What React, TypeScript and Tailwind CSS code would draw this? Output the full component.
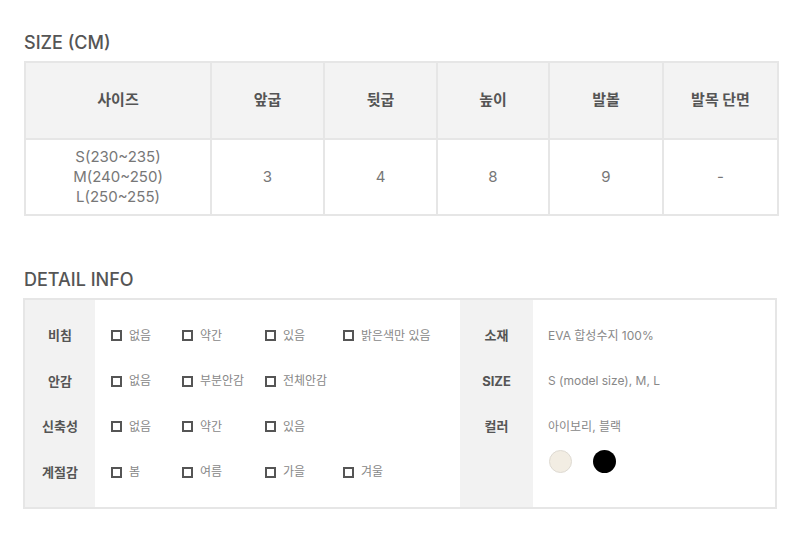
import React from 'react';

const font = { fontFamily: 'Inter, "Noto Sans CJK KR", sans-serif' };

const headers = ['사이즈', '앞굽', '뒷굽', '높이', '발볼', '발목 단면'];
const colWidths = ['w-[186px]', 'w-[113px]', 'w-[113px]', 'w-[112px]', 'w-[114px]', 'w-[115px]'];
const values = ['3', '4', '8', '9', '-'];

const details = [
  { label: '비침', options: ['없음', '약간', '있음', '밝은색만 있음'] },
  { label: '안감', options: ['없음', '부분안감', '전체안감'] },
  { label: '신축성', options: ['없음', '약간', '있음'] },
  { label: '계절감', options: ['봄', '여름', '가을', '겨울'] },
];

const optionCols = ['w-[71px]', 'w-[83px]', 'w-[78px]', 'w-auto'];

function Option({ text, width }: { text: string; width: string }) {
  return (
    <div className={`flex items-center gap-[7px] ${width}`}>
      <span className="w-[11px] h-[11px] border-2 border-[#555] shrink-0" />
      <span className="text-[12px] text-[#888]">{text}</span>
    </div>
  );
}

export default function App() {
  return (
    <div className="w-[800px] h-[558px] bg-white pl-[24px] pt-[31px]" style={font}>
      <h2 className="text-[18px] font-medium text-[#555] leading-[24px]">SIZE (CM)</h2>

      <table className="mt-[6px] w-[754px] table-fixed border-collapse border-2 border-[#e6e6e6]">
        <thead>
          <tr className="h-[77px] bg-[#f3f3f3]">
            {headers.map((h, i) => (
              <th
                key={h}
                className={`${colWidths[i]} border-2 border-[#e6e6e6] text-[15px] font-bold text-[#555]`}
              >
                {h}
              </th>
            ))}
          </tr>
        </thead>
        <tbody>
          <tr className="h-[76px]">
            <td className="border-2 border-[#e6e6e6] text-center text-[15px] leading-[20px] text-[#777]">
              S(230~235)
              <br />
              M(240~250)
              <br />
              L(250~255)
            </td>
            {values.map((v, i) => (
              <td key={i} className="border-2 border-[#e6e6e6] text-center text-[15px] text-[#777]">
                {v}
              </td>
            ))}
          </tr>
        </tbody>
      </table>

      <h2 className="mt-[52px] text-[18px] font-medium text-[#555] leading-[24px]">DETAIL INFO</h2>

      <div className="mt-[6px] w-[754px] h-[211px] flex border-2 border-[#e6e6e6] ml-[-1px]">
        <div className="w-[70px] bg-[#f2f2f2] pt-[13px]">
          {details.map((d) => (
            <div key={d.label} className="h-[45.5px] flex items-center justify-center text-[13px] font-bold text-[#555]">
              {d.label}
            </div>
          ))}
        </div>
        <div className="w-[365px] pt-[13px] pl-[16px]">
          {details.map((d) => (
            <div key={d.label} className="h-[45.5px] flex items-center">
              {d.options.map((o, i) => (
                <Option key={o} text={o} width={optionCols[i]} />
              ))}
            </div>
          ))}
        </div>
        <div className="w-[73px] bg-[#f2f2f2] pt-[13px]">
          {['소재', 'SIZE', '컬러'].map((l) => (
            <div key={l} className="h-[45.5px] flex items-center justify-center text-[13px] font-bold text-[#555]">
              {l}
            </div>
          ))}
        </div>
        <div className="flex-1 pt-[13px] pl-[15px]">
          <div className="h-[45.5px] flex items-center text-[12px] text-[#888]">EVA 합성수지 100%</div>
          <div className="h-[45.5px] flex items-center text-[12px] text-[#888]">S (model size), M, L</div>
          <div className="h-[45.5px] flex items-center text-[12px] text-[#888]">아이보리, 블랙</div>
          <div className="flex gap-[21px] pl-[1px]">
            <span className="w-[23px] h-[23px] rounded-full bg-[#f2ede3] border border-[#dedad2]" />
            <span className="w-[23px] h-[23px] rounded-full bg-black" />
          </div>
        </div>
      </div>
    </div>
  );
}
